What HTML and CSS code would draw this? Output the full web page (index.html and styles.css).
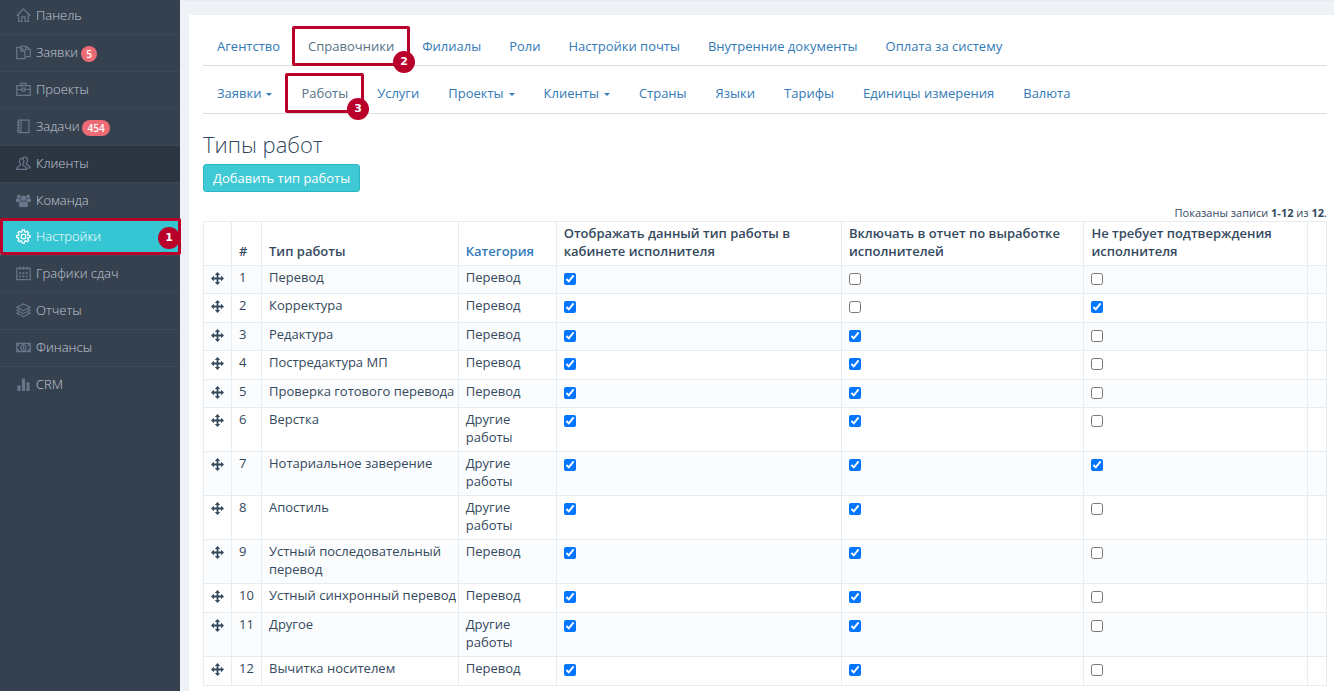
FILE: index.html
```html
<!DOCTYPE html>
<html lang="ru">
<head>
<meta charset="utf-8">
<title>Типы работ</title>
<link rel="stylesheet" href="styles.css">
</head>
<body>
<svg class="sprite" aria-hidden="true">
  <symbol id="move" viewBox="0 0 13 13"><path fill="currentColor" d="M6.500 0 9.200 3H7.400V5.600H10V3.800L13 6.500 10 9.200V7.400H7.400V10H9.200L6.500 13 3.800 10H5.600V7.400H3V9.200L0 6.500 3 3.800V5.600H5.600V3H3.800Z"/></symbol>
</svg>
<div class="layout">
  <nav class="sidebar" aria-label="Главное меню">
    <a class="side-item" href="#"><svg class="icon" viewBox="0 0 16 16"><path d="M.8 8.300 8 1l7.200 7.300M2.800 7v7.300h3.400V9.500h3.600v4.800h3.400V7"/></svg><span>Панель</span></a>
    <a class="side-item" href="#"><svg class="icon" viewBox="0 0 16 16"><path d="M5 2.500H.8v12h8.700v-2M5 2.500 9.500 6.500v6M5 2.500v4h4.500M5.500 2V1.200h5l4.700 3.600v7.700H9.500M10.500 1.200v3.600h4.700"/></svg><span>Заявки</span><span class="count">5</span></a>
    <a class="side-item" href="#"><svg class="icon" viewBox="0 0 16 16"><path d="M.8 3.800h14.400v10.400H.8zM5 3.800V1.500h6v2.300M.8 8h5.400M9.800 8h5.400M6.500 6.500h3v3h-3z"/></svg><span>Проекты</span></a>
    <a class="side-item" href="#"><svg class="icon" viewBox="0 0 16 16"><path d="M2.500 1.200h11.300v13.400H2.500zM5.300 1.200v13.400M1 3.500h3M1 6.500h3M1 9.500h3M1 12.500h3"/></svg><span>Задачи</span><span class="count">454</span></a>
    <a class="side-item side-item-hover" href="#"><svg class="icon" viewBox="0 0 16 16"><path d="M.7 14.300c0-2.700 1.300-3.100 3.500-4 .9-.4.800-1.300.3-2C3 6.300 3.300 2.500 6 2.500S9 6.300 7.500 8.300c-.5.700-.6 1.600.3 2 2.200.9 3.500 1.300 3.500 4zM7 2.300C8 .8 12.700.3 12.300 4.500c-.1 1.500-.6 2.300-1.200 3-.4.600-.3 1.300.5 1.600 2.400 1 3.600 1.300 3.600 3.700h-3.500"/></svg><span>Клиенты</span></a>
    <a class="side-item" href="#"><svg class="icon icon-solid" viewBox="0 0 16 16"><circle cx="3" cy="3.500" r="2"/><circle cx="13" cy="3.500" r="2"/><circle cx="8" cy="5.500" r="2.900"/><path d="M0 9V7.500C0 6 1 5.700 2 5.700c1 .7 2 .6 2.500.2.100 1.300.5 2 1.100 2.700C4.500 8.600 4 9 3.600 9.500H1Q0 9.500 0 9ZM16 9V7.500c0-1.500-1-1.800-2-1.800-1 .7-2 .6-2.500.2-.1 1.300-.5 2-1.100 2.700 1.100 0 1.600.4 2 .9H15q1 0 1-.5ZM3 13c0-3 1-4.300 2.500-4.300 1.500 1 3.500 1 5 0C12 8.700 13 10 13 13q0 2-1.500 2h-7Q3 15 3 13Z"/></svg><span>Команда</span></a>
    <a class="side-item side-item-active" href="#" aria-current="page"><svg class="icon" viewBox="0 0 16 16"><path d="m6.700 1-.4 2-1 .5-1.700-1.100-1.500 1.500 1.100 1.700-.5 1-2 .4v2l2 .4.500 1-1.100 1.700 1.500 1.500 1.700-1.100 1 .5.400 2h2.200l.4-2 1-.5 1.700 1.100 1.500-1.500-1.100-1.700.5-1 2-.4v-2l-2-.4-.5-1 1.100-1.700-1.500-1.500-1.700 1.100-1-.5-.4-2z"/><circle cx="8" cy="8" r="2.500"/></svg><span>Настройки</span><span class="callout callout-side"><b class="step">1</b></span></a>
    <a class="side-item" href="#"><svg class="icon" viewBox="0 0 16 16"><path d="M.8 2.500h14.400v12H.8zM4 .5v3.500M8 .5v3.500M12 .5v3.500"/><path stroke-width="1.800" stroke-dasharray="2 1.500" d="M3.300 7.500h10M3.300 11h10"/></svg><span>Графики сдач</span></a>
    <a class="side-item" href="#"><svg class="icon" viewBox="0 0 16 16"><path d="m8 1 7 3.600-7 3.600-7-3.600zM3 6.700 1 7.800l7 3.600 7-3.600-2-1.100M3 9.900 1 11l7 3.600L15 11l-2-1.100"/></svg><span>Отчеты</span></a>
    <a class="side-item" href="#"><svg class="icon" viewBox="0 0 16 16"><path d="M.8 3.500h14.400v9H.8zM.8 6Q3 6 3.300 3.500M15.200 6Q13 6 12.700 3.500M.8 10q2.200 0 2.500 2.500M15.200 10q-2.200 0-2.500 2.500M7.200 6.800l.8-.6v3.500"/><ellipse cx="8" cy="8" rx="2.700" ry="3.200"/></svg><span>Финансы</span></a>
    <a class="side-item" href="#"><svg class="icon icon-solid" viewBox="0 0 16 16"><path d="M1.500 9h3.300v6H1.500zM6.300 1.500h3.400V15H6.300zM11.200 5.500h3.300V15h-3.300z"/></svg><span>CRM</span></a>
  </nav>
  <main class="content">
    <section class="panel">
      <nav class="tabs" aria-label="Разделы настроек">
        <a class="tab" href="#">Агентство</a>
        <a class="tab tab-active" href="#">Справочники<span class="callout"><b class="step">2</b></span></a>
        <a class="tab" href="#">Филиалы</a>
        <a class="tab" href="#">Роли</a>
        <a class="tab" href="#">Настройки почты</a>
        <a class="tab" href="#">Внутренние документы</a>
        <a class="tab" href="#">Оплата за систему</a>
      </nav>
      <nav class="tabs tabs-sub" aria-label="Справочники">
        <a class="tab" href="#">Заявки<i class="caret"></i></a>
        <a class="tab tab-active" href="#">Работы<span class="callout"><b class="step">3</b></span></a>
        <a class="tab" href="#">Услуги</a>
        <a class="tab" href="#">Проекты<i class="caret"></i></a>
        <a class="tab" href="#">Клиенты<i class="caret"></i></a>
        <a class="tab" href="#">Страны</a>
        <a class="tab" href="#">Языки</a>
        <a class="tab" href="#">Тарифы</a>
        <a class="tab" href="#">Единицы измерения</a>
        <a class="tab" href="#">Валюта</a>
      </nav>
      <h1 class="title">Типы работ</h1>
      <button class="add" type="button">Добавить тип работы</button>
      <p class="summary">Показаны записи <b>1-12</b> из <b>12</b>.</p>
      <table class="grid">
        <colgroup><col class="c-move"><col class="c-num"><col class="c-name"><col class="c-cat"><col class="c-show"><col class="c-report"><col class="c-confirm"><col class="c-end"></colgroup>
        <thead>
          <tr><th></th><th>#</th><th>Тип работы</th><th><a href="#">Категория</a></th><th>Отображать данный тип работы в кабинете исполнителя</th><th>Включать в отчет по выработке исполнителей</th><th>Не требует подтверждения исполнителя</th><th></th></tr>
        </thead>
        <tbody>
          <tr><td><svg class="move"><use href="#move"/></svg></td><td>1</td><td class="name">Перевод</td><td>Перевод</td><td><input type="checkbox" aria-label="Отображать: Перевод" checked></td><td><input type="checkbox" aria-label="В отчет: Перевод"></td><td><input type="checkbox" aria-label="Без подтверждения: Перевод"></td><td></td></tr>
          <tr><td><svg class="move"><use href="#move"/></svg></td><td>2</td><td class="name">Корректура</td><td>Перевод</td><td><input type="checkbox" aria-label="Отображать: Корректура" checked></td><td><input type="checkbox" aria-label="В отчет: Корректура"></td><td><input type="checkbox" aria-label="Без подтверждения: Корректура" checked></td><td></td></tr>
          <tr><td><svg class="move"><use href="#move"/></svg></td><td>3</td><td class="name">Редактура</td><td>Перевод</td><td><input type="checkbox" aria-label="Отображать: Редактура" checked></td><td><input type="checkbox" aria-label="В отчет: Редактура" checked></td><td><input type="checkbox" aria-label="Без подтверждения: Редактура"></td><td></td></tr>
          <tr><td><svg class="move"><use href="#move"/></svg></td><td>4</td><td class="name">Постредактура МП</td><td>Перевод</td><td><input type="checkbox" aria-label="Отображать: Постредактура МП" checked></td><td><input type="checkbox" aria-label="В отчет: Постредактура МП" checked></td><td><input type="checkbox" aria-label="Без подтверждения: Постредактура МП"></td><td></td></tr>
          <tr><td><svg class="move"><use href="#move"/></svg></td><td>5</td><td class="name">Проверка готового перевода</td><td>Перевод</td><td><input type="checkbox" aria-label="Отображать: Проверка готового перевода" checked></td><td><input type="checkbox" aria-label="В отчет: Проверка готового перевода" checked></td><td><input type="checkbox" aria-label="Без подтверждения: Проверка готового перевода"></td><td></td></tr>
          <tr><td><svg class="move"><use href="#move"/></svg></td><td>6</td><td class="name">Верстка</td><td>Другие работы</td><td><input type="checkbox" aria-label="Отображать: Верстка" checked></td><td><input type="checkbox" aria-label="В отчет: Верстка" checked></td><td><input type="checkbox" aria-label="Без подтверждения: Верстка"></td><td></td></tr>
          <tr><td><svg class="move"><use href="#move"/></svg></td><td>7</td><td class="name">Нотариальное заверение</td><td>Другие работы</td><td><input type="checkbox" aria-label="Отображать: Нотариальное заверение" checked></td><td><input type="checkbox" aria-label="В отчет: Нотариальное заверение" checked></td><td><input type="checkbox" aria-label="Без подтверждения: Нотариальное заверение" checked></td><td></td></tr>
          <tr><td><svg class="move"><use href="#move"/></svg></td><td>8</td><td class="name">Апостиль</td><td>Другие работы</td><td><input type="checkbox" aria-label="Отображать: Апостиль" checked></td><td><input type="checkbox" aria-label="В отчет: Апостиль" checked></td><td><input type="checkbox" aria-label="Без подтверждения: Апостиль"></td><td></td></tr>
          <tr><td><svg class="move"><use href="#move"/></svg></td><td>9</td><td class="name">Устный последовательный перевод</td><td>Перевод</td><td><input type="checkbox" aria-label="Отображать: Устный последовательный перевод" checked></td><td><input type="checkbox" aria-label="В отчет: Устный последовательный перевод" checked></td><td><input type="checkbox" aria-label="Без подтверждения: Устный последовательный перевод"></td><td></td></tr>
          <tr><td><svg class="move"><use href="#move"/></svg></td><td>10</td><td class="name">Устный синхронный перевод</td><td>Перевод</td><td><input type="checkbox" aria-label="Отображать: Устный синхронный перевод" checked></td><td><input type="checkbox" aria-label="В отчет: Устный синхронный перевод" checked></td><td><input type="checkbox" aria-label="Без подтверждения: Устный синхронный перевод"></td><td></td></tr>
          <tr><td><svg class="move"><use href="#move"/></svg></td><td>11</td><td class="name">Другое</td><td>Другие работы</td><td><input type="checkbox" aria-label="Отображать: Другое" checked></td><td><input type="checkbox" aria-label="В отчет: Другое" checked></td><td><input type="checkbox" aria-label="Без подтверждения: Другое"></td><td></td></tr>
          <tr><td><svg class="move"><use href="#move"/></svg></td><td>12</td><td class="name">Вычитка носителем</td><td>Перевод</td><td><input type="checkbox" aria-label="Отображать: Вычитка носителем" checked></td><td><input type="checkbox" aria-label="В отчет: Вычитка носителем" checked></td><td><input type="checkbox" aria-label="Без подтверждения: Вычитка носителем"></td><td></td></tr>
        </tbody>
      </table>
    </section>
  </main>
</div>
</body>
</html>
```
FILE: styles.css
```css
* { box-sizing: border-box; }
body {
  margin: 0;
  font: 13px/18px "Open Sans", "Noto Sans", sans-serif;
  color: #34495e;
  background: #eef1f5;
}
a { color: #337ab7; text-decoration: none; }
.sprite { display: none; }
.layout { display: flex; min-height: 100vh; }

.sidebar { flex: 0 0 180px; background: #364150; }
.side-item {
  display: flex;
  align-items: center;
  height: 37px;
  padding: 0 16px 2px;
  border-top: 1px solid #3d4957;
  font-size: 13px;
  font-weight: 300;
  color: #c2cad6;
}
.side-item:first-child { height: 34px; padding-bottom: 4px; border-top: 0; }
.icon {
  width: 15px;
  height: 15px;
  margin-right: 5px;
  fill: none;
  stroke: #68758a;
  stroke-width: 1.3;
}
.icon-solid { fill: #68758a; stroke: none; }
.side-item-hover { background: #2c3542; }
.side-item-active {
  position: relative;
  height: 36px;
  border-top: 0;
  background: #36c6d3;
  color: #fff;
}
.side-item-active .icon { stroke: #fff; }
.count {
  margin: 4px 0 0 3px;
  padding: 0 5px;
  border-radius: 8px;
  background: #ed6b75;
  color: #fff;
  font-size: 10px;
  font-weight: 600;
  line-height: 16px;
}

.callout {
  position: absolute;
  inset: -1px -3px;
  border: 3px solid #b8002a;
  border-radius: 2px;
}
.callout-side { inset: -1px -1px 0 0; }
.step {
  position: absolute;
  right: -8px;
  bottom: -10px;
  width: 22px;
  border-radius: 50%;
  background: #b8002a;
  color: #fff;
  font: bold 11px/22px "DejaVu Sans", sans-serif;
  text-align: center;
}
.callout-side .step { right: -2px; bottom: 3px; }

.content { flex: 1; min-width: 0; padding: 14px 0 0 9px; border-top: 1px solid #e7eaee; }
.panel { min-height: 100%; padding: 12px 7px 5px 14px; background: #fff; }
.tabs { display: flex; gap: 2px; padding-left: 1px; border-bottom: 1px solid #ddd; }
.tabs-sub { gap: 3px; margin-top: 8px; padding-bottom: 1px; }
.tab { position: relative; padding: 10px 13px; }
.tab-active { color: #557386; }
.caret {
  display: inline-block;
  margin-left: 5px;
  border: 3px solid transparent;
  border-top-color: currentColor;
  border-bottom: 0;
  vertical-align: middle;
}
.title { margin: 15px 0 5px; font-size: 22px; font-weight: 300; line-height: 30px; }
.add {
  display: block;
  height: 28px;
  padding: 0 9px;
  border: 1px solid #2bb8c4;
  border-radius: 3px;
  background: #3fc9d5;
  color: #fff;
  font: inherit;
}
.summary { margin: 13px 0 0; font-size: 11px; line-height: 16px; text-align: right; }

.grid { width: 100%; border-collapse: collapse; }
.grid th, .grid td { padding: 2px 7px 5px; border: 1px solid #e7ecf1; text-align: left; }
.grid th { height: 44px; font-weight: 600; vertical-align: bottom; }
.grid td { height: 28px; vertical-align: top; }
.grid .name { padding-right: 1px; }
.grid tbody tr:nth-child(even) td { height: 29px; }
.grid tbody tr:nth-child(odd) { background: #fbfcfd; }
.grid input { display: block; width: 12px; height: 12px; margin: 5px 0 0; }
.move { display: block; width: 13px; height: 13px; margin-top: 4px; }
.c-move { width: 26px; }
.c-num { width: 30px; }
.c-name { width: 197px; }
.c-cat { width: 98px; }
.c-show { width: 286px; }
.c-report { width: 243px; }
.c-confirm { width: 224px; }
.c-end { width: 19px; }
```
